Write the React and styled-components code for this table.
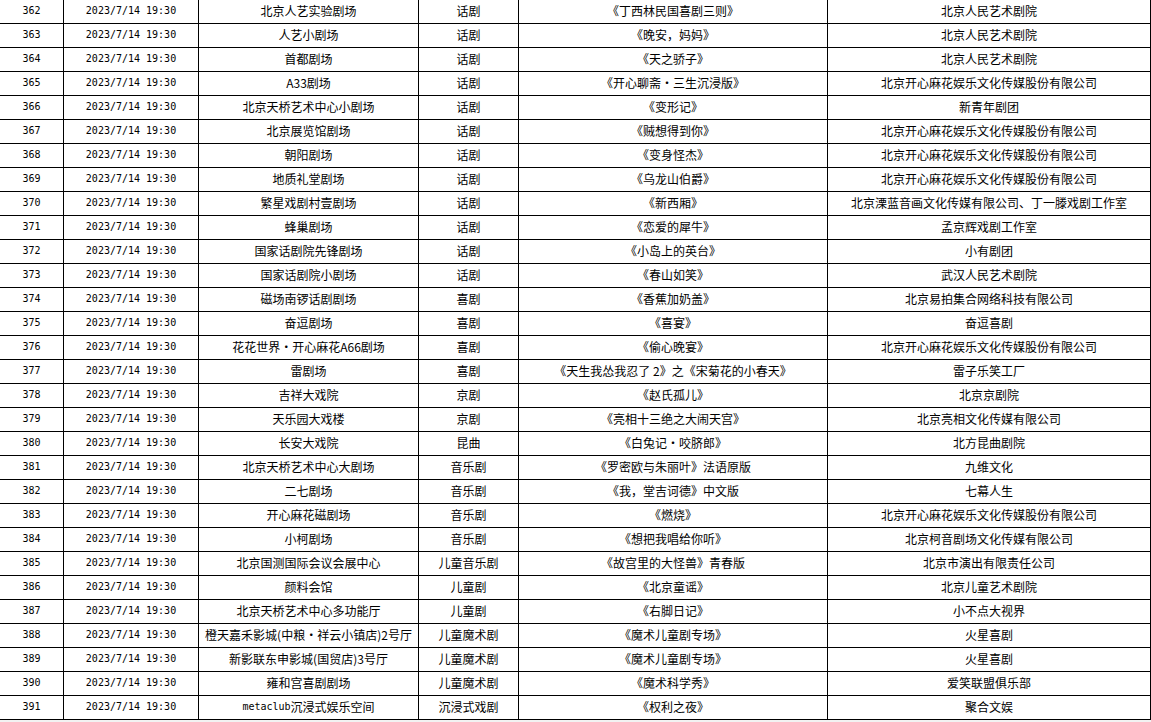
import React from 'react';
import styled, { createGlobalStyle } from 'styled-components';

const GlobalStyle = createGlobalStyle`
  html, body {
    margin: 0;
    padding: 0;
    background: #f2f2f2;
  }
  body {
    font-family: "Noto Sans CJK SC", "Noto Sans", sans-serif;
    font-size: 12px;
    color: #000;
  }
`

const columns = [64, 135, 220, 100, 309, 323]

const Sheet = styled.div`
  width: 1151px;
  background: #fff;
`

const Row = styled.div`
  display: grid;
  grid-template-columns: ${columns.map((w) => `${w}px`).join(' ')};
  height: 24px;
  box-sizing: border-box;
  border-bottom: 1px solid #000;
`

const Cell = styled.div`
  display: flex;
  align-items: center;
  justify-content: center;
  box-sizing: border-box;
  border-right: 1px solid #000;
  padding-bottom: 1px;
  font-family: ${(p) => (p.$mono ? '"DejaVu Sans Mono", monospace' : '"Noto Sans CJK SC", "Noto Sans", sans-serif')};
  font-size: ${(p) => (p.$mono ? '10px' : '12px')};
  white-space: nowrap;
  overflow: hidden;
  line-height: 1;
`

const Latin = styled.span`
  font-family: "DejaVu Sans Mono", monospace;
  font-size: 10px;
`

const kaixin = '北京开心麻花娱乐文化传媒股份有限公司'

const rows = [
  ['北京人艺实验剧场', '话剧', '《丁西林民国喜剧三则》', '北京人民艺术剧院'],
  ['人艺小剧场', '话剧', '《晚安，妈妈》', '北京人民艺术剧院'],
  ['首都剧场', '话剧', '《天之骄子》', '北京人民艺术剧院'],
  ['A33剧场', '话剧', '《开心聊斋·三生沉浸版》', kaixin],
  ['北京天桥艺术中心小剧场', '话剧', '《变形记》', '新青年剧团'],
  ['北京展览馆剧场', '话剧', '《贼想得到你》', kaixin],
  ['朝阳剧场', '话剧', '《变身怪杰》', kaixin],
  ['地质礼堂剧场', '话剧', '《乌龙山伯爵》', kaixin],
  ['繁星戏剧村壹剧场', '话剧', '《新西厢》', '北京溧蓝音画文化传媒有限公司、丁一滕戏剧工作室'],
  ['蜂巢剧场', '话剧', '《恋爱的犀牛》', '孟京辉戏剧工作室'],
  ['国家话剧院先锋剧场', '话剧', '《小岛上的英台》', '小有剧团'],
  ['国家话剧院小剧场', '话剧', '《春山如笑》', '武汉人民艺术剧院'],
  ['磁场南锣话剧剧场', '喜剧', '《香蕉加奶盖》', '北京易拍集合网络科技有限公司'],
  ['奋逗剧场', '喜剧', '《喜宴》', '奋逗喜剧'],
  ['花花世界·开心麻花A66剧场', '喜剧', '《偷心晚宴》', kaixin],
  ['雷剧场', '喜剧', '《天生我怂我忍了 2》之《宋菊花的小春天》', '雷子乐笑工厂'],
  ['吉祥大戏院', '京剧', '《赵氏孤儿》', '北京京剧院'],
  ['天乐园大戏楼', '京剧', '《亮相十三绝之大闹天宫》', '北京亮相文化传媒有限公司'],
  ['长安大戏院', '昆曲', '《白兔记·咬脐郎》', '北方昆曲剧院'],
  ['北京天桥艺术中心大剧场', '音乐剧', '《罗密欧与朱丽叶》法语原版', '九维文化'],
  ['二七剧场', '音乐剧', '《我，堂吉诃德》中文版', '七幕人生'],
  ['开心麻花磁剧场', '音乐剧', '《燃烧》', kaixin],
  ['小柯剧场', '音乐剧', '《想把我唱给你听》', '北京柯音剧场文化传媒有限公司'],
  ['北京国测国际会议会展中心', '儿童音乐剧', '《故宫里的大怪兽》青春版', '北京市演出有限责任公司'],
  ['颜料会馆', '儿童剧', '《北京童谣》', '北京儿童艺术剧院'],
  ['北京天桥艺术中心多功能厅', '儿童剧', '《右脚日记》', '小不点大视界'],
  ['橙天嘉禾影城(中粮·祥云小镇店)2号厅', '儿童魔术剧', '《魔术儿童剧专场》', '火星喜剧'],
  ['新影联东申影城(国贸店)3号厅', '儿童魔术剧', '《魔术儿童剧专场》', '火星喜剧'],
  ['雍和宫喜剧剧场', '儿童魔术剧', '《魔术科学秀》', '爱笑联盟俱乐部'],
  [<><Latin>metaclub</Latin>沉浸式娱乐空间</>, '沉浸式戏剧', '《权利之夜》', '聚合文娱'],
]

export default function App() {
  return (
    <>
      <GlobalStyle />
      <Sheet>
        {rows.map(([venue, kind, title, org], i) => (
          <Row key={i}>
            <Cell $mono>{362 + i}</Cell>
            <Cell $mono>2023/7/14 19:30</Cell>
            <Cell>{venue}</Cell>
            <Cell>{kind}</Cell>
            <Cell>{title}</Cell>
            <Cell>{org}</Cell>
          </Row>
        ))}
      </Sheet>
    </>
  )
}
